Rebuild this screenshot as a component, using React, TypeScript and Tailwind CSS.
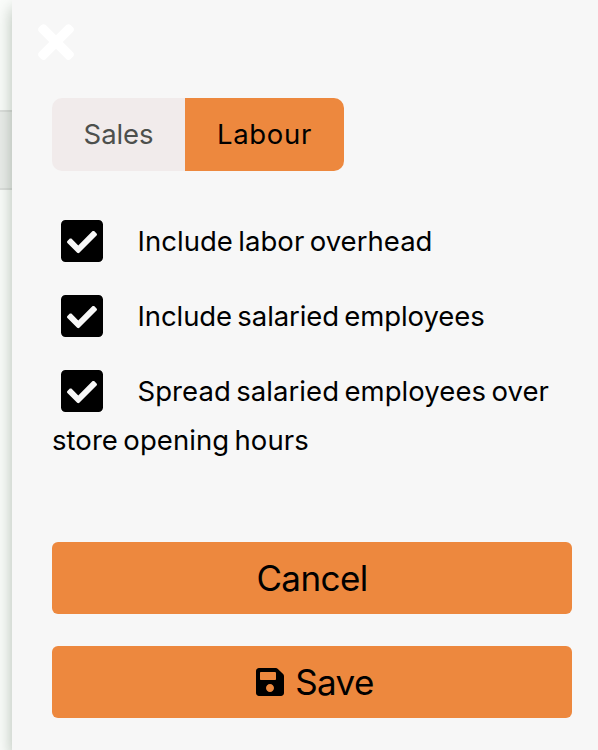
import { useState } from "react";
import classNames from "clsx";
import { FaCheckSquare, FaRegSquare, FaSave, FaTimes } from "react-icons/fa";

type Tab = "Sales" | "Labour";

interface Option {
  id: string;
  label: string;
  className: string;
}

const tabs: { name: Tab; className: string }[] = [
  { name: "Sales", className: "w-[133px] rounded-l-[10px] tracking-[-0.1px]" },
  { name: "Labour", className: "w-[159px] rounded-r-[10px] tracking-[0.7px]" },
];

const options: Option[] = [
  { id: "overhead", label: "Include labor overhead", className: "tracking-[0.04px]" },
  { id: "salaried", label: "Include salaried employees", className: "tracking-[-0.08px]" },
  { id: "spread", label: "Spread salaried employees over store opening hours", className: "tracking-[0.06px]" },
];

const buttonClass =
  "flex h-[72px] w-full items-center justify-center rounded-[6px] bg-[#ed883e] text-[35px] tracking-[-0.6px] text-black";

export default function App() {
  const [activeTab, setActiveTab] = useState<Tab>("Labour");
  const [checked, setChecked] = useState<string[]>(options.map((option) => option.id));

  const handleToggle = (id: string) => {
    setChecked((prev) => (prev.includes(id) ? prev.filter((item) => item !== id) : [...prev, id]));
  };

  return (
    <div className="flex h-[750px] w-[598px] overflow-hidden bg-[#fbfdfb] font-['Inter',sans-serif]">
      {/* page behind the drawer */}
      <div className="w-3 shrink-0 pt-[110px]">
        <div className="h-20 border-y-2 border-[#dcdedc] bg-[#ebedeb]" />
      </div>
      <aside className="relative flex grow flex-col bg-[#f7f7f7] pr-[26px] pl-10 shadow-[0_8px_16px_rgba(60,85,60,0.38)]">
        <button className="mt-4 -ml-[14px] h-[52px] w-9 text-white" aria-label="Close">
          <FaTimes className="h-[52px] w-9" />
        </button>
        <div className="mt-[30px] flex h-[73px]">
          {tabs.map((tab) => (
            <button
              key={tab.name}
              onClick={() => setActiveTab(tab.name)}
              className={classNames("text-[27.5px]", tab.className, {
                "bg-[#ed883e] text-black": activeTab === tab.name,
                "bg-[#f1ebeb] text-[#4d504d]": activeTab !== tab.name,
              })}
            >
              {tab.name}
            </button>
          ))}
        </div>
        <div className="mt-[46px] flex flex-col gap-[26px] text-[27.5px] leading-[49px] text-black [word-spacing:-2.4px]">
          {options.map((option) => {
            const Icon = checked.includes(option.id) ? FaCheckSquare : FaRegSquare;
            return (
              <div key={option.id} className={option.className}>
                <button
                  onClick={() => handleToggle(option.id)}
                  className="mr-[34.5px] ml-[9px] inline-block h-12 w-[42px] align-top leading-none"
                >
                  <Icon className="h-12 w-[42px]" />
                </button>
                {option.label}
              </div>
            );
          })}
        </div>
        <div className="mt-[77px] flex flex-col gap-8">
          <button className={buttonClass}>Cancel</button>
          <button className={classNames(buttonClass, "pl-1.5")}>
            <FaSave className="mr-[11px] h-8 w-7" />
            Save
          </button>
        </div>
      </aside>
    </div>
  );
}
